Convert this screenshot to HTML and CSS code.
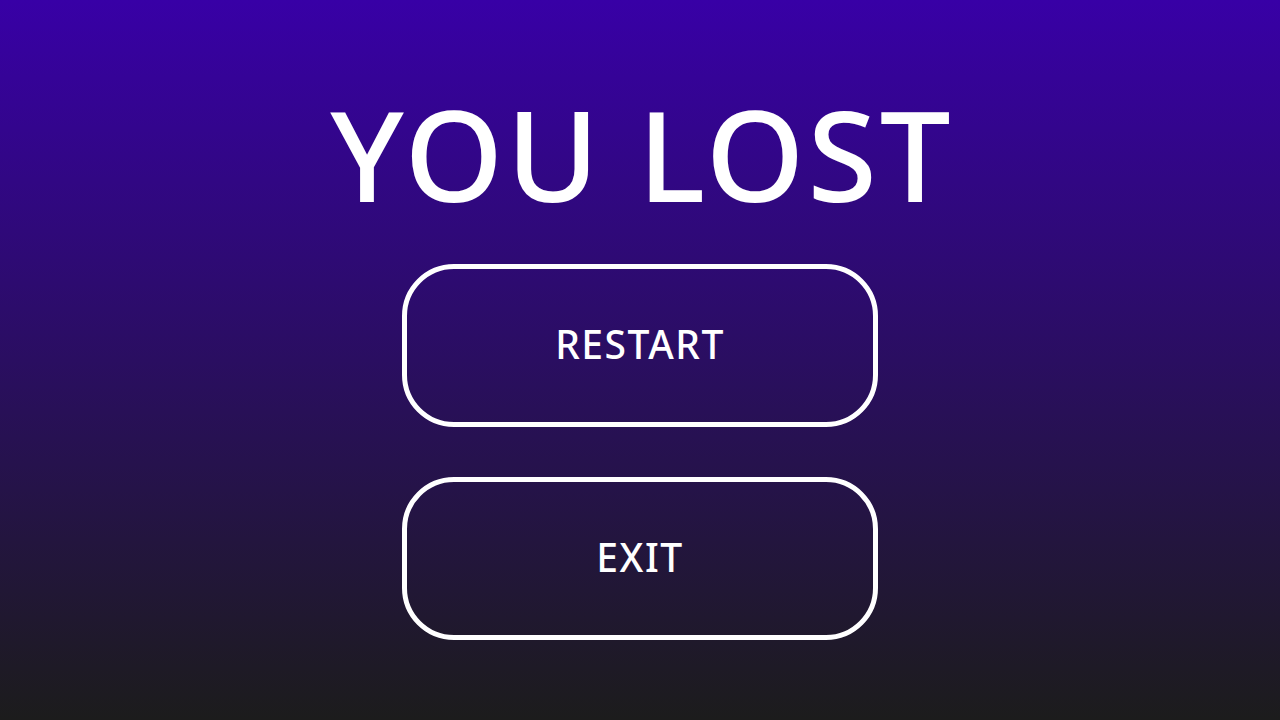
FILE: index.html
```html
<!DOCTYPE html>
<html lang="en">
<head>
<meta charset="utf-8">
<title>You Lost</title>
<link rel="stylesheet" href="styles.css">
</head>
<body>
<main class="screen">
  <h1 class="title">YOU LOST</h1>
  <div class="actions">
    <button class="btn">RESTART</button>
    <button class="btn">EXIT</button>
  </div>
</main>
</body>
</html>
```
FILE: styles.css
```css
html, body {
  margin: 0;
  height: 100%;
}
body {
  background: linear-gradient(to bottom, #3800a6 0%, #1c1c1c 100%);
  font-family: "Noto Sans", "Open Sans", sans-serif;
  color: #fff;
}
.screen {
  height: 720px;
  display: flex;
  flex-direction: column;
  align-items: center;
}
.title {
  margin: 78px 0 0 4px;
  font-size: 126px;
  font-weight: 500;
  line-height: 150px;
  letter-spacing: 3px;
}
.actions {
  margin-top: 36px;
  display: flex;
  flex-direction: column;
  gap: 50px;
}
.btn {
  box-sizing: border-box;
  width: 476px;
  height: 163px;
  padding: 0 0 4px;
  border: 5px solid #fff;
  border-radius: 52px;
  background: transparent;
  color: #fff;
  font-family: inherit;
  font-size: 39px;
  font-weight: 500;
  letter-spacing: 1.5px;
  cursor: pointer;
}
```
